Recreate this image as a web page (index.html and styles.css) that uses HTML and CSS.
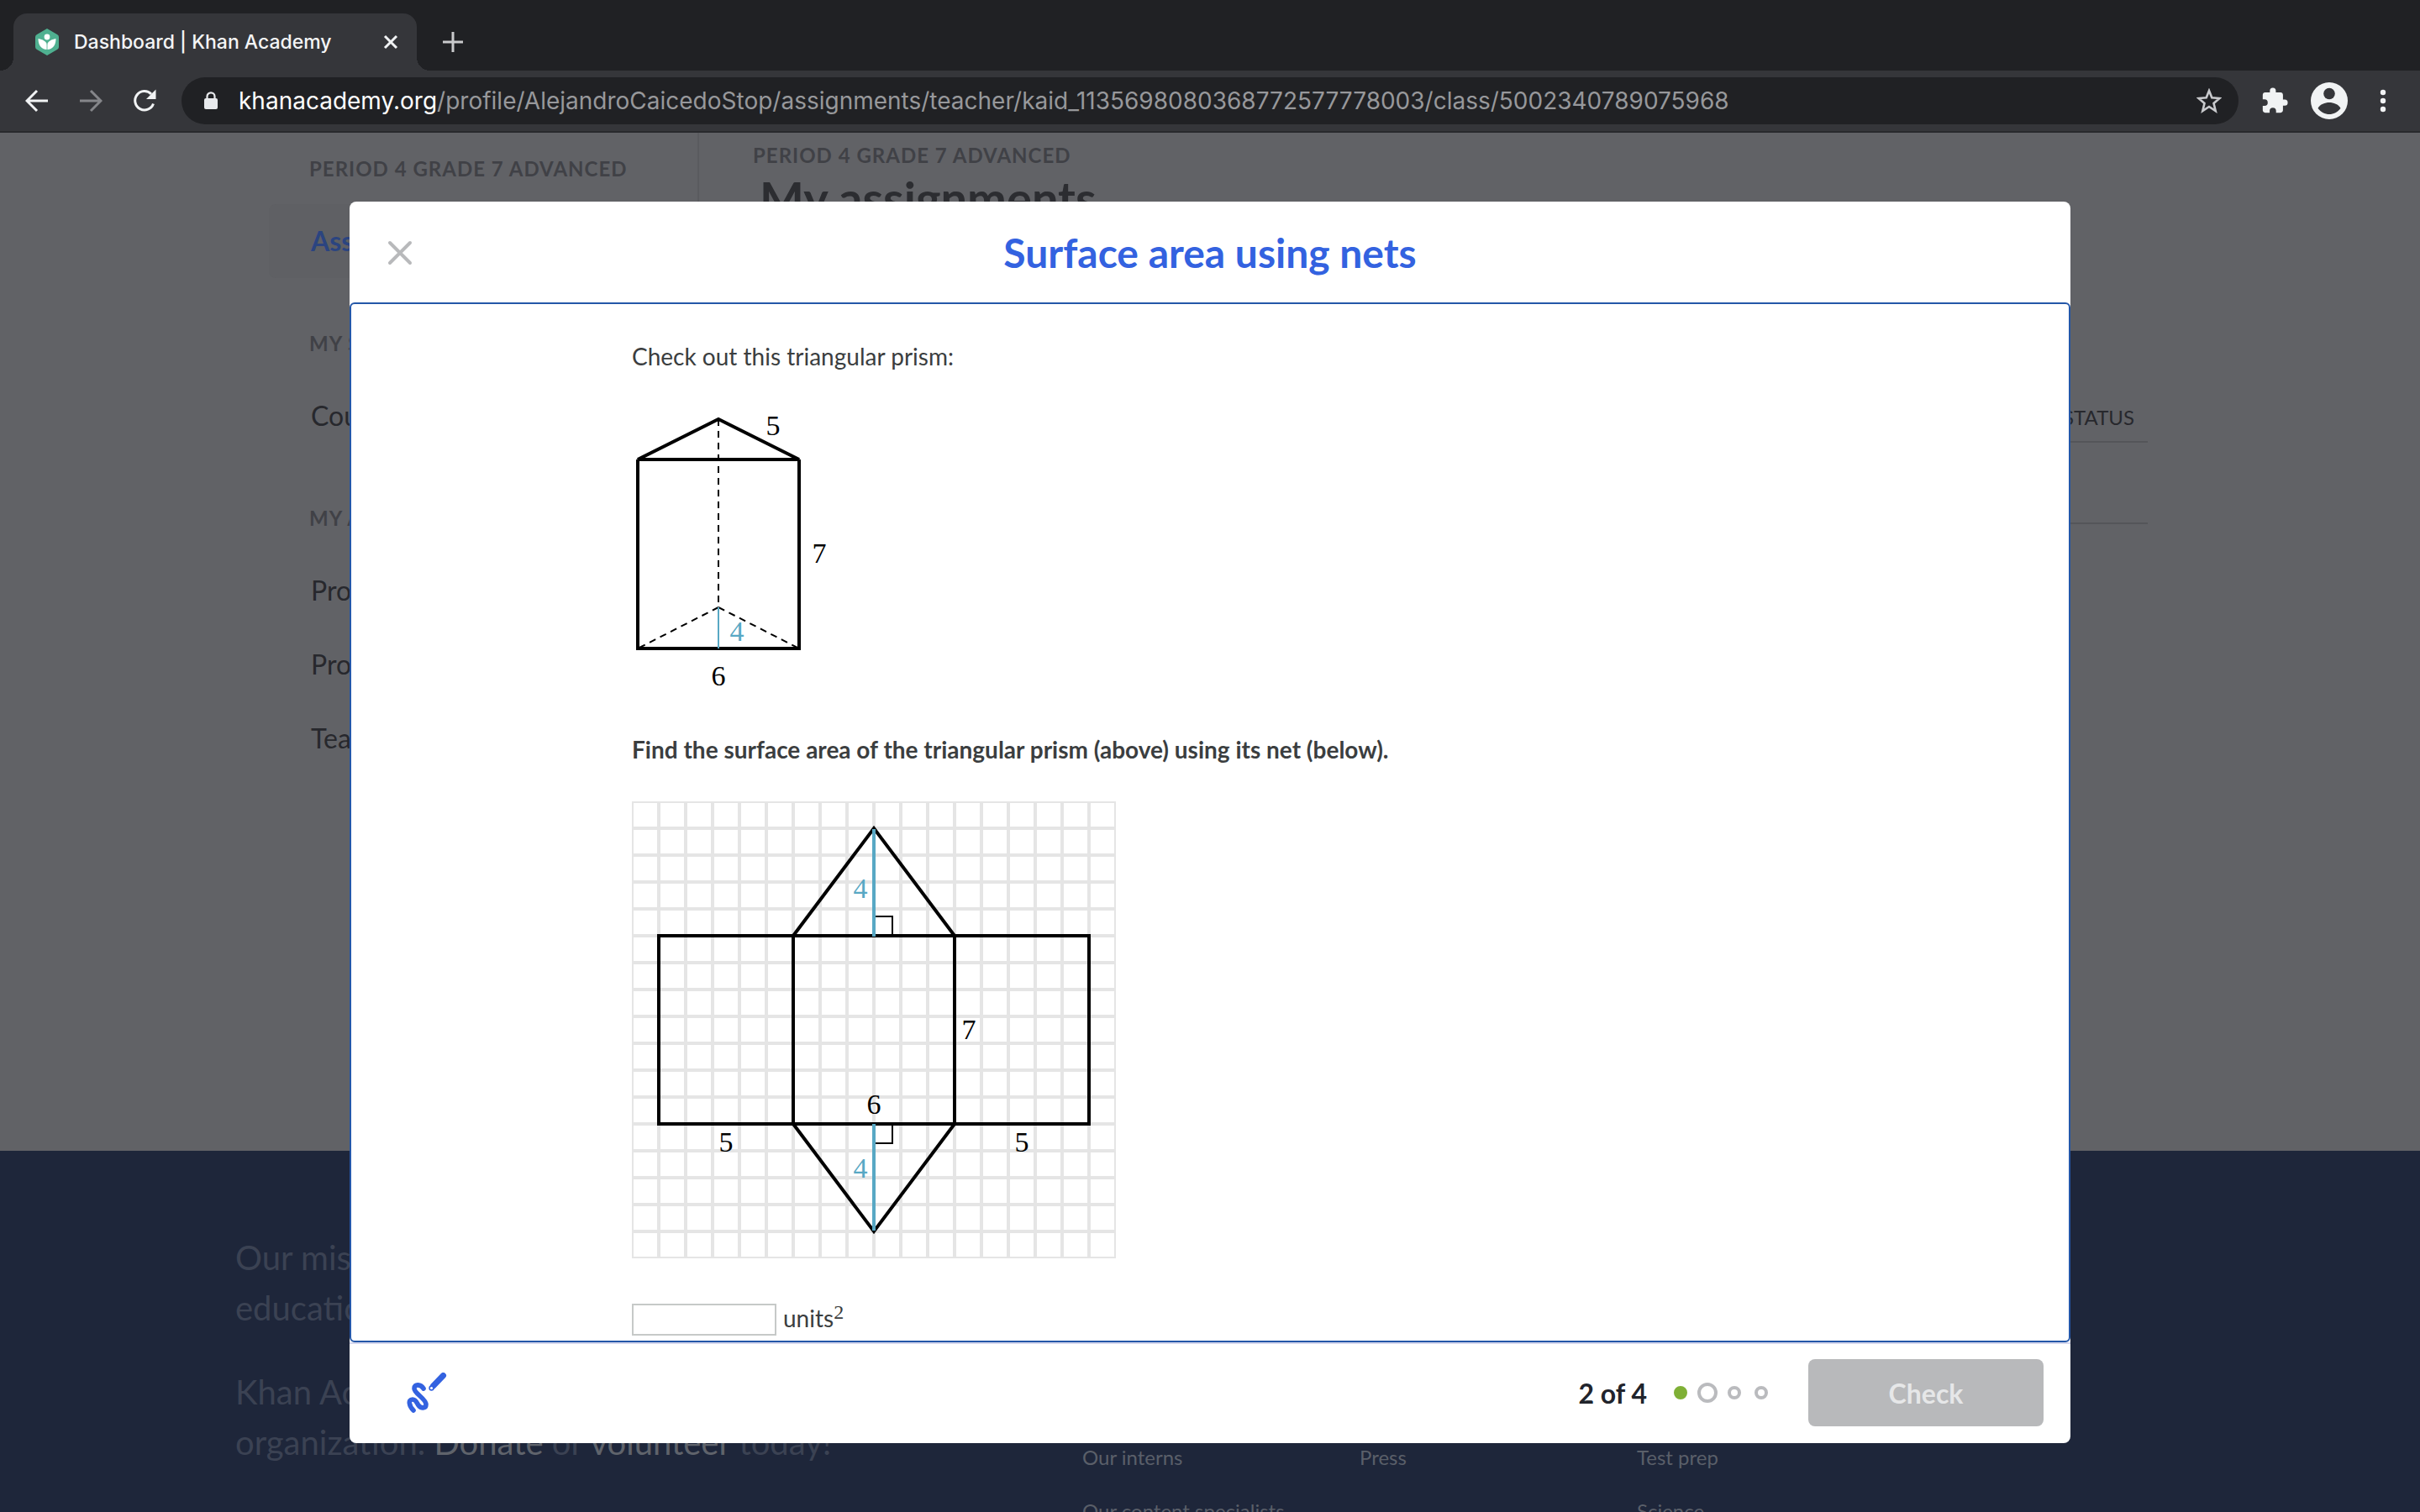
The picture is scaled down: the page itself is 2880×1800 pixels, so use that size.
FILE: index.html
```html
<!DOCTYPE html>
<html lang="en">
<head>
    <meta charset="UTF-8">
    <meta name="viewport" content="width=device-width, initial-scale=1.0">
    <title>Dashboard | Khan Academy</title>
    <link rel="stylesheet" href="styles.css">
</head>
<body>
    <!-- Browser tabs -->
    <div class="tab-strip">
        <div class="tab">
            <svg class="favicon" viewBox="0 0 28 32">
                <path d="M14 0 L26 7 Q28 8 28 10 V22 Q28 24 26 25 L14 32 L2 25 Q0 24 0 22 V10 Q0 8 2 7 Z" fill="#4fb090"/>
                <circle cx="14" cy="10" r="3.4" fill="#fff"/>
                <path d="M3.500 12 C9 13 12.500 15 14 19 C15.500 15 19 13 24.500 12 C24.500 20 21 24.500 14 25 C7 24.500 3.500 20 3.500 12 Z" fill="#fff"/>
                <path d="M14 18 V25" stroke="#4fb090" stroke-width="0.8"/>
            </svg>
            <span class="tab-title">Dashboard | Khan Academy</span>
            <button type="button" class="tab-close" aria-label="Close tab">
                <svg viewBox="0 0 18 18" width="18" height="18"><path d="M2 2 L16 16 M16 2 L2 16" stroke="#f1f3f4" stroke-width="3"/></svg>
            </button>
        </div>
        <button type="button" class="new-tab" aria-label="New tab">
            <svg viewBox="0 0 26 26" width="26" height="26"><path d="M13 1 V25 M1 13 H25" stroke="#c9cacc" stroke-width="3"/></svg>
        </button>
    </div>

    <!-- Toolbar -->
    <div class="toolbar">
        <div class="nav-buttons">
            <button type="button" aria-label="Back">
                <svg viewBox="0 0 28 28" width="28" height="28" fill="none" stroke="#f1f3f4" stroke-width="3"><path d="M27 14 H3 M14 2 L2 14 L14 26"/></svg>
            </button>
            <button type="button" aria-label="Forward">
                <svg viewBox="0 0 28 28" width="28" height="28" fill="none" stroke="#85868a" stroke-width="3"><path d="M1 14 H25 M14 2 L26 14 L14 26"/></svg>
            </button>
            <button type="button" aria-label="Reload">
                <svg viewBox="0 0 28 28" width="28" height="28"><path d="M24.500 17.500 A11.200 11.200 0 1 1 22 6" fill="none" stroke="#f1f3f4" stroke-width="3"/><path d="M27.500 0.500 V12 H16 Z" fill="#f1f3f4"/></svg>
            </button>
        </div>
        <div class="address-bar">
            <svg class="lock" viewBox="0 0 18 22" width="18" height="22"><path d="M4.500 9 V5.800 A4.500 4.500 0 0 1 13.500 5.800 V9" fill="none" stroke="#e8eaed" stroke-width="2.200"/><rect x="1" y="8" width="16" height="13" rx="2" fill="#e8eaed"/></svg>
            <div class="url"><span class="host">khanacademy.org</span>/profile/AlejandroCaicedoStop/assignments/teacher/kaid_1135698080368772577778003/class/5002340789075968</div>
            <button type="button" aria-label="Bookmark this page">
                <svg viewBox="0 0 30 30" width="30" height="30"><path d="M15 3 L18.300 11.300 L27.500 12 L20.500 18 L22.700 27 L15 22 L7.300 27 L9.500 18 L2.500 12 L11.700 11.300 Z" fill="none" stroke="#c9cacd" stroke-width="2.600"/></svg>
            </button>
        </div>
        <div class="tools">
            <button type="button" aria-label="Extensions">
                <svg viewBox="0 0 24 24" width="34" height="34"><path d="M20.500 11H19V7c0-1.100-.9-2-2-2h-4V3.500a2.500 2.500 0 0 0-5 0V5H4c-1.100 0-2 .9-2 2v3.800h1.500a2.700 2.700 0 0 1 0 5.400H2V20c0 1.100.9 2 2 2h3.800v-1.500a2.700 2.700 0 0 1 5.400 0V22H17c1.100 0 2-.9 2-2v-4h1.500a2.500 2.500 0 0 0 0-5z" fill="#f1f3f4"/></svg>
            </button>
            <button type="button" aria-label="Profile">
                <svg viewBox="0 0 44 44" width="44" height="44"><circle cx="22" cy="22" r="22" fill="#f1f3f4"/><circle cx="22" cy="13.500" r="6.800" fill="#35363a"/><path d="M8.500 31 C11 26 17 24 22 24 C27 24 33 26 35.500 31 C32 35.500 27 38 22 38 C17 38 12 35.500 8.500 31 Z" fill="#35363a"/></svg>
            </button>
            <button type="button" aria-label="Menu">
                <svg viewBox="0 0 8 28" width="8" height="28" fill="#f1f3f4"><circle cx="4" cy="4" r="3.200"/><circle cx="4" cy="14" r="3.200"/><circle cx="4" cy="24" r="3.200"/></svg>
            </button>
        </div>
    </div>

    <div class="viewport">
        <!-- Dashboard behind the dialog -->
        <div class="dashboard">
            <nav class="sidebar">
                <h2>PERIOD 4 GRADE 7 ADVANCED</h2>
                <a class="active" href="#">Assignments</a>
                <h2>MY STUFF</h2>
                <a href="#">Courses</a>
                <h2>MY ACCOUNT</h2>
                <a href="#">Progress</a>
                <a href="#">Profile</a>
                <a href="#">Teachers</a>
            </nav>
            <main class="main">
                <h2>PERIOD 4 GRADE 7 ADVANCED</h2>
                <h1>My assignments</h1>
                <table class="assignments">
                    <tr><th>STATUS</th></tr>
                    <tr><td></td></tr>
                </table>
            </main>
        </div>
        <footer class="footer">
            <div class="footer-inner">
                <div class="mission">
                    <p>Our mission is to provide a free, world-class<br>education to anyone, anywhere.</p>
                    <p>Khan Academy is a 501(c)(3) nonprofit<br>organization. <a href="#">Donate</a> or <a href="#">volunteer</a> today!</p>
                </div>
                <div class="links">
                    <a href="#">Our interns</a>
                    <a href="#">Our content specialists</a>
                </div>
                <div class="links">
                    <a href="#">Press</a>
                </div>
                <div class="links">
                    <a href="#">Test prep</a>
                    <a href="#">Science</a>
                </div>
            </div>
        </footer>

        <!-- Exercise dialog -->
        <div class="overlay">
            <section class="modal" role="dialog" aria-labelledby="modal-title">
                <header class="modal-header">
                    <button type="button" class="modal-close" aria-label="Close">
                        <svg viewBox="0 0 30 30" width="30" height="30"><path d="M3 3 L27 27 M27 3 L3 27" stroke="#b8b9bb" stroke-width="4" stroke-linecap="round"/></svg>
                    </button>
                    <h1 id="modal-title">Surface area using nets</h1>
                </header>

                <div class="modal-body">
                    <form class="exercise" id="exercise">
                        <p>Check out this triangular prism:</p>
                        <svg class="figure" viewBox="0 0 256 344" width="256" height="344">
                            <g class="edge">
                                <path d="M7 61 L103 13 L199 61 Z"/>
                                <path d="M7 61 V286 H199 V61"/>
                            </g>
                            <g class="hidden-edge">
                                <path d="M103 13 V237"/>
                                <path d="M103 237 L7 286"/>
                                <path d="M103 237 L199 286"/>
                            </g>
                            <path class="height thin" d="M103 237 V286"/>
                            <text x="168" y="32">5</text>
                            <text x="223" y="184">7</text>
                            <text x="125" y="277" class="blue">4</text>
                            <text x="103" y="330">6</text>
                        </svg>
                        <p><strong>Find the surface area of the triangular prism (above) using its net (below).</strong></p>
                        <svg class="figure" viewBox="0 0 576 544" width="576" height="544">
                            <defs>
                                <pattern id="grid" width="32" height="32" patternUnits="userSpaceOnUse">
                                    <path d="M0 0 H32 V32 H0 Z" fill="none" stroke="#e5e5e5" stroke-width="4"/>
                                </pattern>
                            </defs>
                            <rect width="576" height="544" fill="url(#grid)"/>
                            <g class="edge">
                                <rect x="32" y="160" width="512" height="224"/>
                                <path d="M192 160 V384 M384 160 V384"/>
                                <path d="M192 160 L288 32 L384 160"/>
                                <path d="M192 384 L288 512 L384 384"/>
                            </g>
                            <path class="right-angle" d="M288 137 H310 V160 M288 407 H310 V384"/>
                            <path class="height" d="M288 33 V161 M288 384 V511"/>
                            <text x="272" y="115" class="blue">4</text>
                            <text x="401" y="283">7</text>
                            <text x="288" y="372">6</text>
                            <text x="112" y="417">5</text>
                            <text x="464" y="417">5</text>
                            <text x="272" y="448" class="blue">4</text>
                        </svg>
                        <div class="answer">
                            <input type="text" id="answer" name="answer">
                            <label for="answer">units<sup>2</sup></label>
                        </div>
                    </form>
                </div>

                <div class="modal-footer">
                    <button type="button" class="scratchpad" aria-label="Scratchpad">
                        <svg viewBox="0 0 48 48" width="48" height="48" fill="none" stroke="#3362e0" stroke-linecap="round" stroke-linejoin="round">
                            <path d="M20 19 C17 14 9 13 9 19 C9 25 23 31 23 38 C23 43 17 43 14 39 C12 36 11 32 7 32 C1 32 3 40 8 45" stroke-width="5.600"/>
                            <path d="M43.500 3.500 L31.500 16" stroke-width="7"/>
                            <circle cx="29.500" cy="18.500" r="2.400" fill="#fff" stroke-width="1.600"/>
                        </svg>
                    </button>
                    <span class="count">2 of 4</span>
                    <div class="dots">
                        <span class="dot done"></span>
                        <span class="dot current"></span>
                        <span class="dot"></span>
                        <span class="dot"></span>
                    </div>
                    <button type="submit" form="exercise" class="check" disabled>Check</button>
                </div>
            </section>
        </div>
    </div>
</body>
</html>
```
FILE: styles.css
```css
* {
    box-sizing: border-box;
}
body {
    display: flex;
    flex-direction: column;
    height: 100vh;
    margin: 0;
    overflow: hidden;
    font-family: Lato, sans-serif;
    background-color: #202124;
}
button {
    display: flex;
    align-items: center;
    justify-content: center;
    padding: 0;
    border: none;
    background: none;
    cursor: pointer;
}
a {
    text-decoration: none;
}
h1, h2, p {
    margin: 0;
}
svg {
    display: block;
}

/* Browser tabs */
.tab-strip {
    display: flex;
    align-items: center;
    padding: 16px 16px 0;
    background-color: #202124;
}
.tab {
    position: relative;
    display: flex;
    align-items: center;
    width: 480px;
    height: 68px;
    padding: 0 22px 0 26px;
    border-radius: 16px 16px 0 0;
    background-color: #35363a;
}
.tab::before,
.tab::after {
    content: "";
    position: absolute;
    bottom: 0;
    width: 16px;
    height: 16px;
}
.tab::before {
    right: 100%;
    background: radial-gradient(circle at 0 0, transparent 16px, #35363a 16px);
}
.tab::after {
    left: 100%;
    background: radial-gradient(circle at 100% 0, transparent 16px, #35363a 16px);
}
.favicon {
    width: 28px;
    height: 32px;
}
.tab-title {
    flex: 1;
    margin-left: 18px;
    font-family: Inter, sans-serif;
    font-size: 23px;
    font-weight: 500;
    color: #f4f5f6;
}
.new-tab {
    margin-left: 30px;
}

/* Toolbar */
.toolbar {
    display: flex;
    align-items: center;
    height: 74px;
    padding: 0 40px 0 30px;
    background-color: #35363a;
    border-bottom: 2px solid #28292c;
}
.nav-buttons {
    display: flex;
    gap: 36px;
    margin-right: 30px;
}
.address-bar {
    display: flex;
    flex: 1;
    align-items: center;
    height: 56px;
    padding: 0 20px 0 26px;
    border-radius: 28px;
    background-color: #202124;
}
.url {
    flex: 1;
    margin-left: 24px;
    font-family: Inter, sans-serif;
    font-size: 28px;
    white-space: nowrap;
    color: #97989b;
}
.host {
    color: #fff;
}
.tools {
    display: flex;
    align-items: center;
    gap: 26px;
    margin-left: 26px;
}
.tools button:last-child {
    margin-left: 12px;
}

/* Dashboard */
.viewport {
    position: relative;
    display: flex;
    flex: 1;
    flex-direction: column;
    min-height: 0;
    overflow: hidden;
    background-color: #616266;
}
.dashboard {
    display: flex;
    flex-shrink: 0;
    width: 100%;
    max-width: 2240px;
    height: 1212px;
    margin: 0 auto;
}
.dashboard h2 {
    font-size: 24px;
    font-weight: bold;
    line-height: 32px;
    letter-spacing: 1px;
    color: #404146;
}
.sidebar {
    width: 512px;
    padding-top: 27px;
    border-right: 2px solid #5a5b5f;
}
.sidebar h2 {
    padding: 0 48px;
    margin: 0 0 26px;
}
.sidebar a + h2 {
    margin-top: 62px;
}
.sidebar a {
    display: block;
    padding: 0 50px;
    font-size: 32px;
    line-height: 88px;
    color: #27282d;
}
.sidebar .active {
    background-color: #5f6064;
    border-radius: 8px;
    font-weight: bold;
    color: #2b4480;
}
.main {
    flex: 1;
    padding: 11px 4px 0 64px;
}
.main h1 {
    padding-left: 8px;
    font-size: 56px;
    line-height: 70px;
    color: #2c2d31;
}
.assignments {
    width: 100%;
    margin-top: 202px;
    border-collapse: collapse;
}
.assignments th {
    padding: 2px 16px 6px;
    border-bottom: 2px solid #545559;
    font-size: 24px;
    font-weight: normal;
    line-height: 44px;
    text-align: right;
    color: #27282d;
}
.assignments td {
    height: 97px;
    padding: 0;
    border-bottom: 2px solid #545559;
}

/* Site footer */
.footer {
    flex: 1 0 auto;
    background-color: #1e263a;
}
.footer-inner {
    display: grid;
    grid-template-columns: 1008px repeat(3, 330px);
    max-width: 2320px;
    margin: 0 auto;
}
.mission {
    padding-top: 97px;
    font-size: 40px;
    line-height: 60px;
    color: #3b4253;
}
.mission p {
    margin-bottom: 40px;
}
.mission a {
    color: #5f636b;
}
.links {
    padding-top: 333px;
}
.links a {
    display: block;
    font-size: 24px;
    line-height: 64px;
    color: #5a5f69;
}

/* Exercise dialog */
.overlay {
    position: absolute;
    inset: 0;
    display: flex;
    justify-content: center;
    padding: 82px 32px;
}
.modal {
    display: flex;
    flex-direction: column;
    width: 100%;
    max-width: 2048px;
    border-radius: 8px;
    background-color: #fff;
}
.modal-header {
    display: grid;
    grid-template-columns: 120px 1fr 120px;
    align-items: center;
    height: 120px;
    padding-top: 2px;
}
.modal-header h1 {
    font-size: 48px;
    line-height: 60px;
    text-align: center;
    color: #3362e0;
}
.modal-body {
    flex: 1;
    padding: 40px 32px 0;
    border: 2px solid #2457a8;
    border-radius: 6px;
}
.exercise {
    display: flex;
    flex-direction: column;
    gap: 40px;
    max-width: 1376px;
    margin: 0 auto;
    font-size: 28px;
    line-height: 44px;
    color: #3b3e40;
}
.figure text {
    font-family: "Liberation Serif", serif;
    font-size: 34px;
    text-anchor: middle;
    fill: #000;
}
.figure .blue {
    fill: #58a8c4;
}
.edge {
    fill: none;
    stroke: #000;
    stroke-width: 4;
}
.hidden-edge {
    fill: none;
    stroke: #000;
    stroke-width: 2;
    stroke-dasharray: 8 6;
}
.height {
    stroke: #58a8c4;
    stroke-width: 4;
}
.height.thin {
    stroke-width: 2;
}
.right-angle {
    fill: none;
    stroke: #000;
    stroke-width: 2;
}
.answer {
    display: flex;
    align-items: center;
    gap: 8px;
    padding-top: 9px;
}
.answer input {
    width: 172px;
    height: 38px;
    padding: 0 8px;
    border: 2px solid #c6c9c8;
    font-size: 28px;
}
.answer label {
    padding-bottom: 4px;
}
.answer sup {
    font-family: "Liberation Serif", serif;
    font-size: 24px;
    line-height: 0;
}
.modal-footer {
    display: flex;
    align-items: center;
    height: 120px;
    padding: 0 32px 2px 68px;
    border-top: 2px solid #d6d8ee;
}
.scratchpad {
    margin-right: auto;
}
.count {
    font-size: 32px;
    font-weight: bold;
    color: #21242c;
}
.dots {
    display: flex;
    align-items: center;
    gap: 16px;
    margin: 0 48px 0 32px;
}
.dot {
    width: 16px;
    height: 16px;
    border: 4px solid #babbbe;
    border-radius: 50%;
}
.dot.done {
    border-color: #7fb036;
    background-color: #7fb036;
}
.dot.current {
    width: 24px;
    height: 24px;
    margin: 0 -4px;
}
.check {
    width: 280px;
    height: 80px;
    border-radius: 8px;
    background-color: #b8b9bb;
    font-family: inherit;
    font-size: 32px;
    font-weight: bold;
    color: #e6e7e8;
}
```
